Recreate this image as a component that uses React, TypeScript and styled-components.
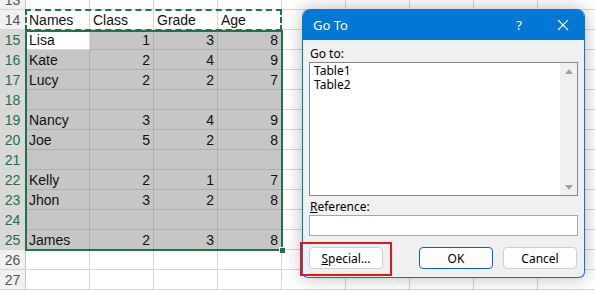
import React from 'react'
import styled, { createGlobalStyle, css } from 'styled-components'

const GlobalStyle = createGlobalStyle`
  html, body {
    margin: 0;
    padding: 0;
    background: #ffffff;
  }
  * {
    box-sizing: border-box;
  }
`

const Screen = styled.div`
  position: relative;
  width: 595px;
  height: 294px;
  overflow: hidden;
  background: #ffffff;
  font-family: 'Liberation Sans', Arial, sans-serif;
`

const Sheet = styled.div`
  display: grid;
  grid-template-columns: 26px repeat(9, 64px);
  grid-auto-rows: 20px;
  margin-top: -10px;
`

const RowHead = styled.div<{ $r: number; $active?: boolean }>`
  grid-area: ${(p) => p.$r} / 1;
  display: flex;
  align-items: center;
  justify-content: center;
  padding-top: 1px;
  font-size: 14px;
  border-right: 1px solid #c8c8c8;
  border-bottom: 1px solid #d6d6d6;
  background: ${(p) => (p.$active ? '#d9d9d9' : '#f1f1f1')};
  color: ${(p) => (p.$active ? '#217346' : '#555555')};
`

const Cell = styled.div<{ $r: number; $c: number; $num?: boolean; $sel?: boolean }>`
  grid-area: ${(p) => p.$r} / ${(p) => p.$c};
  display: flex;
  align-items: center;
  justify-content: ${(p) => (p.$num ? 'flex-end' : 'flex-start')};
  padding: 1px 3px 0 3px;
  font-size: 14px;
  color: #111111;
  border-right: 1px solid #d6d6d6;
  border-bottom: 1px solid #d6d6d6;
  white-space: nowrap;
  ${(p) =>
    p.$sel &&
    css`
      background: #c6c6c6;
      border-color: #b0b0b0;
    `}
`

const CopyMarquee = styled.div`
  grid-area: 2 / 2 / 3 / 6;
  margin: -1px 0 -1px -1px;
  border: 2px dashed #217346;
  pointer-events: none;
  z-index: 1;
`

const SelectionFrame = styled.div`
  position: relative;
  grid-area: 3 / 2 / 14 / 6;
  margin: 0 -1px -1px -1px;
  border: 2px solid #217346;
  pointer-events: none;
  z-index: 1;
`

const FillHandle = styled.span`
  position: absolute;
  right: -5px;
  bottom: -5px;
  width: 7px;
  height: 7px;
  background: #217346;
  border: 1px solid #ffffff;
`

const Dialog = styled.div`
  position: absolute;
  left: 302px;
  top: 9px;
  width: 283px;
  height: 269px;
  display: flex;
  flex-direction: column;
  border: 1px solid #0078d4;
  border-top: none;
  border-radius: 8px 8px 6px 6px;
  background: #f0f0f0;
  box-shadow: 0 0 18px rgba(0, 0, 0, 0.28);
  font-family: 'Noto Sans', 'Open Sans', sans-serif;
  font-size: 12px;
  color: #000000;
  overflow: hidden;
`

const TitleBar = styled.div`
  display: flex;
  align-items: center;
  height: 31px;
  margin: 0 -1px;
  padding: 0 0 0 11px;
  background: #0078d4;
  color: #ffffff;
  font-size: 13px;
`

const Title = styled.span`
  flex: 1;
`

const TitleButton = styled.span`
  display: flex;
  align-items: center;
  justify-content: center;
  width: 44px;
  height: 31px;
  font-size: 13px;
`

const Body = styled.div`
  display: flex;
  flex-direction: column;
  padding: 5px 6px 0 6px;
`

const Label = styled.div`
  height: 17px;
  line-height: 17px;
  padding-left: 1px;
`

const ListBox = styled.div`
  display: flex;
  height: 134px;
  border: 1px solid #848890;
  background: #ffffff;
`

const ListItems = styled.div`
  flex: 1;
  padding: 1px 0 0 4px;
  line-height: 14px;
`

const ScrollBar = styled.div`
  display: flex;
  flex-direction: column;
  justify-content: space-between;
  align-items: center;
  width: 17px;
  padding: 6px 0 5px;
  background: #f0f0f0;
`

const Arrow = styled.span<{ $down?: boolean }>`
  width: 0;
  height: 0;
  border-left: 4px solid transparent;
  border-right: 4px solid transparent;
  ${(p) =>
    p.$down
      ? css`border-top: 5px solid #a3a3a3;`
      : css`border-bottom: 5px solid #a3a3a3;`}
`

const RefLabel = styled(Label)`
  margin-top: 2px;
`

const TextInput = styled.div`
  height: 21px;
  border: 1px solid #a8a8a8;
  background: #ffffff;
`

const Buttons = styled.div`
  display: flex;
  align-items: center;
  margin-top: 11px;
`

const Button = styled.div<{ $primary?: boolean; $gap?: number }>`
  display: flex;
  align-items: center;
  justify-content: center;
  width: 74px;
  height: 22px;
  border-radius: 4px;
  background: #fdfdfd;
  border: 1px solid ${(p) => (p.$primary ? '#0067c0' : '#d0d0d0')};
  margin-left: ${(p) => p.$gap ?? 0}px;
`

const Key = styled.span`
  text-decoration: underline;
`

const Highlight = styled.div`
  position: absolute;
  left: 300px;
  top: 242px;
  width: 92px;
  height: 34px;
  border: 2px solid #e8141c;
  pointer-events: none;
`

type Row = { n: number; name?: string; cls?: string; grade?: string; age?: string }

const rows: Row[] = [
  { n: 13 },
  { n: 14, name: 'Names', cls: 'Class', grade: 'Grade', age: 'Age' },
  { n: 15, name: 'Lisa', cls: '1', grade: '3', age: '8' },
  { n: 16, name: 'Kate', cls: '2', grade: '4', age: '9' },
  { n: 17, name: 'Lucy', cls: '2', grade: '2', age: '7' },
  { n: 18 },
  { n: 19, name: 'Nancy', cls: '3', grade: '4', age: '9' },
  { n: 20, name: 'Joe', cls: '5', grade: '2', age: '8' },
  { n: 21 },
  { n: 22, name: 'Kelly', cls: '2', grade: '1', age: '7' },
  { n: 23, name: 'Jhon', cls: '3', grade: '2', age: '8' },
  { n: 24 },
  { n: 25, name: 'James', cls: '2', grade: '3', age: '8' },
  { n: 26 },
  { n: 27 },
]

const CloseIcon = () => (
  <svg width='12' height='12' viewBox='0 0 12 12'>
    <path d='M1 1 L11 11 M11 1 L1 11' stroke='#ffffff' strokeWidth='1.1' fill='none' />
  </svg>
)

export default function App() {
  return (
    <Screen>
      <GlobalStyle />
      <Sheet>
        {rows.map((r, idx) => {
          const row = idx + 1
          const sel = r.n >= 15 && r.n <= 25
          const header = r.n === 14
          return (
            <React.Fragment key={r.n}>
              <RowHead $r={row} $active={sel}>
                {r.n}
              </RowHead>
              <Cell $r={row} $c={2} $sel={sel && r.n !== 15}>
                {r.name}
              </Cell>
              <Cell $r={row} $c={3} $sel={sel} $num={!header}>
                {r.cls}
              </Cell>
              <Cell $r={row} $c={4} $sel={sel} $num={!header}>
                {r.grade}
              </Cell>
              <Cell $r={row} $c={5} $sel={sel} $num={!header}>
                {r.age}
              </Cell>
              {Array.from({ length: 5 }).map((_, i) => (
                <Cell key={i} $r={row} $c={6 + i} />
              ))}
            </React.Fragment>
          )
        })}
        <CopyMarquee />
        <SelectionFrame>
          <FillHandle />
        </SelectionFrame>
      </Sheet>

      <Dialog>
        <TitleBar>
          <Title>Go To</Title>
          <TitleButton>?</TitleButton>
          <TitleButton>
            <CloseIcon />
          </TitleButton>
        </TitleBar>
        <Body>
          <Label>Go to:</Label>
          <ListBox>
            <ListItems>
              <div>Table1</div>
              <div>Table2</div>
            </ListItems>
            <ScrollBar>
              <Arrow />
              <Arrow $down />
            </ScrollBar>
          </ListBox>
          <RefLabel>
            <Key>R</Key>eference:
          </RefLabel>
          <TextInput />
          <Buttons>
            <Button>
              <Key>S</Key>pecial...
            </Button>
            <Button $primary $gap={36}>
              OK
            </Button>
            <Button $gap={10}>Cancel</Button>
          </Buttons>
        </Body>
      </Dialog>
      <Highlight />
    </Screen>
  )
}
